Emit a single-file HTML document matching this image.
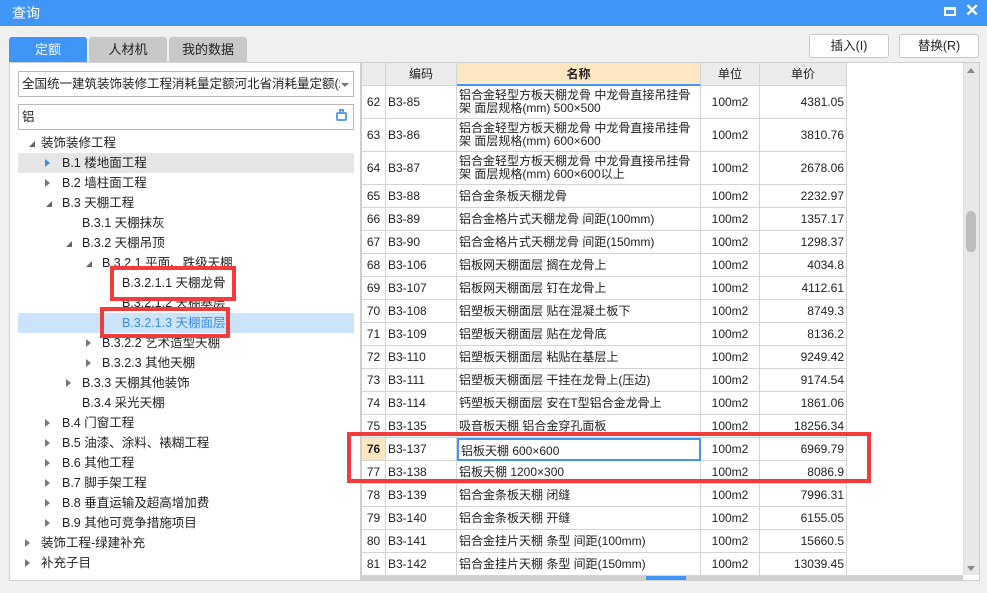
<!DOCTYPE html>
<html><head><meta charset="utf-8"><style>
*{margin:0;padding:0;box-sizing:border-box}
body{width:987px;height:593px;background:#f0f0f0;font-family:"Liberation Sans","Noto Sans CJK SC",sans-serif;font-size:12px;color:#222;position:relative;overflow:hidden}
.a{position:absolute}
.title{left:0;top:0;width:987px;height:26px;background:#4096f7;color:#fff;font-size:14px;line-height:26px;padding-left:12px}
.tab{top:37px;height:25px;line-height:25px;text-align:center;font-size:13px;border-radius:3px 3px 0 0}
.btn{top:34px;height:24px;border:1px solid #c8c8c8;background:#fff;border-radius:3px;text-align:center;line-height:22px;font-size:12.5px}
.lp{left:9px;top:62px;width:352px;height:519px;border:1px solid #cfcfcf;background:#fff}
.tr{position:absolute;height:20px;line-height:20px;font-size:12.5px;white-space:nowrap}
.ar{position:absolute;width:0;height:0;border-top:4px solid transparent;border-bottom:4px solid transparent;border-left:5px solid #777}
.ex{position:absolute;width:0;height:0;border-left:6px solid transparent;border-bottom:6px solid #666}
.grid{left:361px;top:62px;width:619px;height:519px;background:#fff;border:1px solid #cfcfcf}
.row{position:absolute;left:362px;width:485px}
.c{position:absolute;top:0;bottom:0;border-right:1px solid #d4d4d4;border-bottom:1px solid #d4d4d4;overflow:hidden;white-space:nowrap;font-size:12px}
.red{position:absolute;border:4px solid #f23b3b}
</style></head><body>
<div class="a title">查询</div>
<div class="a" style="left:944px;top:7px;width:12px;height:9px;border:2px solid #fff;border-top-width:3px"></div>
<div class="a" style="left:965px;top:1px;color:#fff;font-size:17px;font-weight:bold">✕</div>

<div class="a tab" style="left:9px;width:78px;background:#4096f7;color:#fff">定额</div>
<div class="a tab" style="left:89px;width:78px;background:#c8c8c8">人材机</div>
<div class="a tab" style="left:169px;width:78px;background:#c8c8c8">我的数据</div>
<div class="a btn" style="left:809px;width:80px">插入(I)</div>
<div class="a btn" style="left:899px;width:80px">替换(R)</div>

<div class="a lp"></div>
<div class="a" style="left:18px;top:71px;width:336px;height:26px;border:1px solid #b8b8b8;background:#fff;line-height:24px;padding-left:3px;font-size:12.5px;overflow:hidden;white-space:nowrap"><span style="display:inline-block;width:318px;overflow:hidden">全国统一建筑装饰装修工程消耗量定额河北省消耗量定额(20</span></div>
<div class="a" style="left:341px;top:83px;border-left:4px solid transparent;border-right:4px solid transparent;border-top:4px solid #777"></div>
<div class="a" style="left:18px;top:104px;width:336px;height:26px;border:1px solid #b8b8b8;background:#fff;line-height:24px;padding-left:3px;font-size:12.5px">铝</div>
<div class="a" style="left:336px;top:112px;width:11px;height:9px;border:2px solid #5aa0e8;border-radius:2px"></div>
<div class="a" style="left:339px;top:109px;width:5px;height:4px;border:2px solid #5aa0e8;border-bottom:none"></div>

<div class="a" style="left:18px;top:153px;width:336px;height:20px;background:#e6e6e6"></div>
<div class="a" style="left:18px;top:313px;width:336px;height:20px;background:#cce4fa"></div>

<div class="ex" style="left:29px;top:141px"></div><div class="tr" style="left:41px;top:133px">装饰装修工程</div>
<div class="ar" style="left:45px;top:159px;border-left-color:#3a8ee6"></div><div class="tr" style="left:62px;top:153px">B.1 楼地面工程</div>
<div class="ar" style="left:45px;top:179px"></div><div class="tr" style="left:62px;top:173px">B.2 墙柱面工程</div>
<div class="ex" style="left:46px;top:201px"></div><div class="tr" style="left:62px;top:193px">B.3 天棚工程</div>
<div class="tr" style="left:82px;top:213px">B.3.1 天棚抹灰</div>
<div class="ex" style="left:66px;top:241px"></div><div class="tr" style="left:82px;top:233px">B.3.2 天棚吊顶</div>
<div class="ex" style="left:86px;top:261px"></div><div class="tr" style="left:102px;top:253px">B.3.2.1 平面、跌级天棚</div>
<div class="tr" style="left:122px;top:293px">B.3.2.1.2 天棚基层</div>
<div class="tr" style="left:122px;top:313px;color:#3a8ee6">B.3.2.1.3 天棚面层</div>
<div class="ar" style="left:86px;top:339px"></div><div class="tr" style="left:102px;top:333px">B.3.2.2 艺术造型天棚</div>
<div class="ar" style="left:86px;top:359px"></div><div class="tr" style="left:102px;top:353px">B.3.2.3 其他天棚</div>
<div class="ar" style="left:66px;top:379px"></div><div class="tr" style="left:82px;top:373px">B.3.3 天棚其他装饰</div>
<div class="tr" style="left:82px;top:393px">B.3.4 采光天棚</div>
<div class="ar" style="left:45px;top:419px"></div><div class="tr" style="left:62px;top:413px">B.4 门窗工程</div>
<div class="ar" style="left:45px;top:439px"></div><div class="tr" style="left:62px;top:433px">B.5 油漆、涂料、裱糊工程</div>
<div class="ar" style="left:45px;top:459px"></div><div class="tr" style="left:62px;top:453px">B.6 其他工程</div>
<div class="ar" style="left:45px;top:479px"></div><div class="tr" style="left:62px;top:473px">B.7 脚手架工程</div>
<div class="ar" style="left:45px;top:499px"></div><div class="tr" style="left:62px;top:493px">B.8 垂直运输及超高增加费</div>
<div class="ar" style="left:45px;top:519px"></div><div class="tr" style="left:62px;top:513px">B.9 其他可竞争措施项目</div>
<div class="ar" style="left:25px;top:539px"></div><div class="tr" style="left:41px;top:533px">装饰工程-绿建补充</div>
<div class="ar" style="left:25px;top:559px"></div><div class="tr" style="left:41px;top:553px">补充子目</div>

<div class="red" style="left:110px;top:266px;width:126px;height:35px;background:#fff"></div>
<div class="tr" style="left:122px;top:273px">B.3.2.1.1 天棚龙骨</div>
<div class="red" style="left:100px;top:307px;width:130px;height:31px"></div>

<div class="a grid"></div>
<div class="a" style="left:963px;top:63px;width:16px;height:512px;background:#e8e8e8;border-left:1px solid #ddd"></div>
<div class="a" style="left:966px;top:211px;width:10px;height:41px;background:#bdbdbd;border-radius:5px"></div>
<div class="a" style="left:967px;top:68px;border-left:4px solid transparent;border-right:4px solid transparent;border-bottom:5px solid #888"></div>
<div class="a" style="left:967px;top:566px;border-left:4px solid transparent;border-right:4px solid transparent;border-top:5px solid #888"></div>
<div class="a" style="left:362px;top:575px;width:601px;height:5px;background:#cfcfcf"></div>
<div class="a" style="left:646px;top:575px;width:40px;height:5px;background:#4096f7"></div>

<div class="row" style="top:63px;height:23px;background:#ebebeb">
<div class="c" style="left:0;width:24px"></div>
<div class="c" style="left:24px;width:71px;text-align:center;line-height:22px">编码</div>
<div class="c" style="left:95px;width:244px;text-align:center;line-height:22px;background:#fde6c4;font-weight:bold;border-bottom:2px solid #4096f7">名称</div>
<div class="c" style="left:339px;width:59px;text-align:center;line-height:22px">单位</div>
<div class="c" style="left:398px;width:87px;text-align:center;line-height:22px">单价</div>
</div>
<div id="rows"></div>
<script>
var d=[[62,'B3-85','铝合金轻型方板天棚龙骨 中龙骨直接吊挂骨<br>架 面层规格(mm) 500×500','4381.05',2],
[63,'B3-86','铝合金轻型方板天棚龙骨 中龙骨直接吊挂骨<br>架 面层规格(mm) 600×600','3810.76',2],
[64,'B3-87','铝合金轻型方板天棚龙骨 中龙骨直接吊挂骨<br>架 面层规格(mm) 600×600以上','2678.06',2],
[65,'B3-88','铝合金条板天棚龙骨','2232.97'],[66,'B3-89','铝合金格片式天棚龙骨 间距(100mm)','1357.17'],
[67,'B3-90','铝合金格片式天棚龙骨 间距(150mm)','1298.37'],[68,'B3-106','铝板网天棚面层 搁在龙骨上','4034.8'],
[69,'B3-107','铝板网天棚面层 钉在龙骨上','4112.61'],[70,'B3-108','铝塑板天棚面层 贴在混凝土板下','8749.3'],
[71,'B3-109','铝塑板天棚面层 贴在龙骨底','8136.2'],[72,'B3-110','铝塑板天棚面层 粘贴在基层上','9249.42'],
[73,'B3-111','铝塑板天棚面层 干挂在龙骨上(压边)','9174.54'],[74,'B3-114','钙塑板天棚面层 安在T型铝合金龙骨上','1861.06'],
[75,'B3-135','吸音板天棚 铝合金穿孔面板','18256.34'],[76,'B3-137','铝板天棚 600×600','6969.79'],
[77,'B3-138','铝板天棚 1200×300','8086.9'],[78,'B3-139','铝合金条板天棚 闭缝','7996.31'],
[79,'B3-140','铝合金条板天棚 开缝','6155.05'],[80,'B3-141','铝合金挂片天棚 条型 间距(100mm)','15660.5'],
[81,'B3-142','铝合金挂片天棚 条型 间距(150mm)','13039.45']];
var y=86,h='';
d.forEach(function(r){var H=r[4]?33:23,lh=r[4]?'13px':'22px',pt=r[4]?'3px':'0';var sel=r[0]==76;
h+='<div class="row" style="top:'+y+'px;height:'+H+'px">'+
'<div class="c" style="left:0;width:24px;text-align:center;line-height:'+H+'px;background:'+(sel?'#fde6c4;font-weight:bold':'#fff')+'">'+r[0]+'</div>'+
'<div class="c" style="left:24px;width:71px;padding-left:2px;line-height:'+H+'px">'+r[1]+'</div>'+
'<div class="c" style="left:95px;width:244px;padding-left:2px;padding-top:'+pt+';line-height:'+lh+';'+(sel?'border:2px solid #4096f7':'')+'">'+r[2]+'</div>'+
'<div class="c" style="left:339px;width:59px;text-align:center;line-height:'+H+'px">100m2</div>'+
'<div class="c" style="left:398px;width:87px;text-align:right;padding-right:2px;line-height:'+H+'px">'+r[3]+'</div></div>';y+=H;});
document.getElementById('rows').innerHTML=h;
</script>
<div class="red" style="left:347px;top:432px;width:524px;height:51px"></div>
</body></html>
